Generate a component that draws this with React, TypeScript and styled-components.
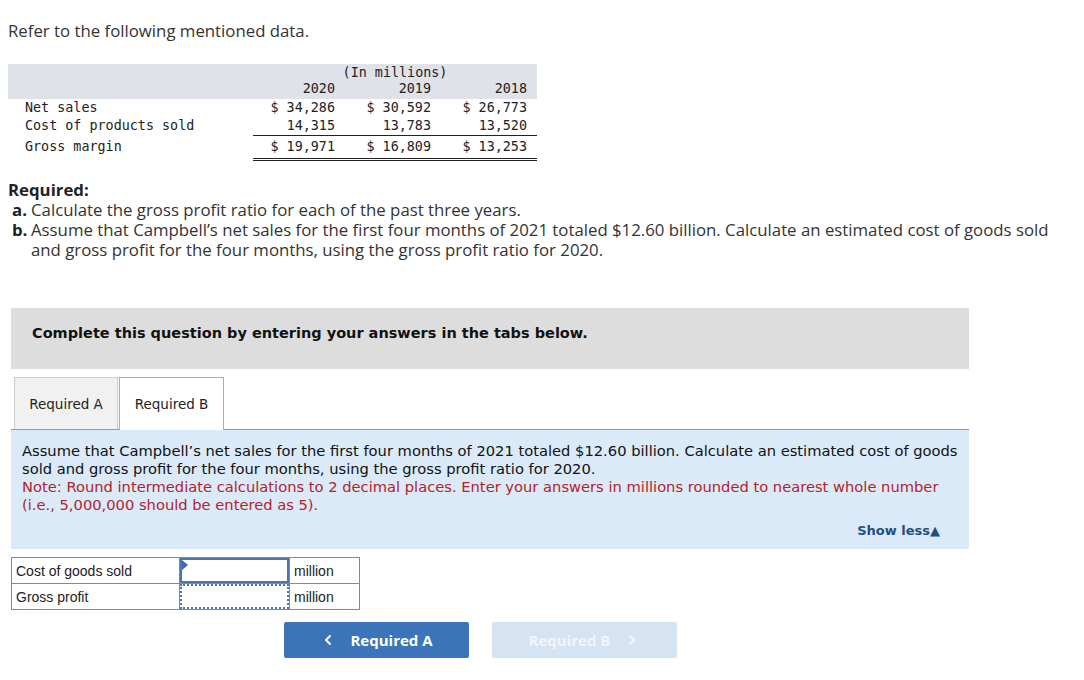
import React from "react";
import styled, { createGlobalStyle } from "styled-components";
import { ChevronLeft, ChevronRight } from "lucide-react";

const Global = createGlobalStyle`
  html, body { margin: 0; padding: 0; background: #fff; }
  body { font-family: "Open Sans", "Lato", sans-serif; color: #222; }
`;

const Page = styled.div`
  width: 1084px;
  padding: 21px 0 0 8px;
  box-sizing: border-box;
`;

const Intro = styled.p`
  margin: 0;
  font-family: "Open Sans", sans-serif;
  font-size: 16.8px;
  line-height: 20px;
  color: #333;
`;

const DataGrid = styled.div`
  margin-top: 23px;
  width: 529px;
  display: grid;
  grid-template-columns: 245px 84px 96px 104px;
  font-family: "DejaVu Sans Mono", "Liberation Mono", monospace;
  font-size: 13.4px;
  color: #222;
`;

const HeadBand = styled.div`
  grid-column: 1 / -1;
  display: grid;
  grid-template-columns: 245px 84px 96px 104px;
  background: #dfe2e9;
  padding: 1px 0 2px;
  line-height: 16px;
`;

const Caption = styled.div`
  grid-column: 2 / -1;
  text-align: center;
`;

const Cell = styled.div<{ $pr?: number; $under?: "single" | "double"; $h?: number }>`
  text-align: right;
  padding-right: ${(p) => p.$pr ?? 2}px;
  line-height: ${(p) => p.$h ?? 18}px;
  white-space: pre;
  border-bottom: ${(p) =>
    p.$under === "single" ? "1.5px solid #222" : p.$under === "double" ? "3px double #222" : "none"};
`;

const Label = styled.div<{ $h?: number }>`
  padding-left: 17px;
  line-height: ${(p) => p.$h ?? 18}px;
`;

const Required = styled.div`
  margin-top: 19px;
  width: 1060px;
  font-family: "Open Sans", sans-serif;
  font-size: 16.8px;
  line-height: 20px;
  color: #333;
`;

const ReqTitle = styled.div`
  font-weight: 700;
  color: #222;
`;

const ReqItem = styled.div`
  display: flex;
  padding-left: 4px;
`;

const ReqLetter = styled.span`
  font-weight: 700;
  width: 19px;
  flex: none;
  color: #222;
`;

const Banner = styled.div`
  margin: 48px 0 0 3px;
  width: 958px;
  height: 61px;
  background: #dddddd;
  padding: 16px 0 0 21px;
  box-sizing: border-box;
  font-family: "DejaVu Sans", Verdana, sans-serif;
  font-weight: 700;
  font-size: 14.5px;
  line-height: 18px;
  color: #111;
`;

const Tabs = styled.div`
  margin: 8px 0 0 3px;
  width: 958px;
  display: flex;
  padding-left: 3px;
  box-sizing: border-box;
  border-bottom: 1px solid #999;
`;

const Tab = styled.div<{ $active?: boolean }>`
  width: ${(p) => (p.$active ? 105 : 104)}px;
  box-sizing: border-box;
  display: flex;
  align-items: center;
  justify-content: center;
  border: 1px solid ${(p) => (p.$active ? "#aaa" : "#ccc")};
  border-bottom: none;
  background: ${(p) => (p.$active ? "#fff" : "#f1f1f1")};
  margin-right: 1px;
  margin-bottom: ${(p) => (p.$active ? "-1px" : "0")};
  height: ${(p) => (p.$active ? 53 : 52)}px;
  font-family: "DejaVu Sans", Tahoma, sans-serif;
  font-size: 13.5px;
  color: #222;
`;

const Panel = styled.div`
  margin-left: 3px;
  width: 958px;
  height: 119px;
  box-sizing: border-box;
  background: #dbeaf8;
  padding: 12px 11px 0 11px;
  font-family: "DejaVu Sans", Verdana, sans-serif;
  font-size: 14.7px;
  line-height: 18px;
  color: #111;
  display: flex;
  flex-direction: column;
`;

const Note = styled.div`
  color: #b3232a;
`;

const ShowLess = styled.div`
  margin-top: auto;
  margin-bottom: 9px;
  align-self: flex-end;
  margin-right: 18px;
  font-weight: 700;
  color: #1f4f80;
  font-size: 13px;
`;

const AnswerTable = styled.table`
  margin: 8px 0 0 3px;
  border-collapse: collapse;
  font-family: "Liberation Sans", Arial, sans-serif;
  font-size: 14px;
  color: #222;
`;

const Td = styled.td<{ $w: number }>`
  width: ${(p) => p.$w}px;
  height: 25px;
  border: 1px solid #888;
  padding: 0 4px;
  box-sizing: border-box;
`;

const InputTd = styled.td`
  width: 109px;
  height: 25px;
  padding: 0;
  border: 1px solid #888;
  position: relative;
`;

const AnswerInput = styled.input<{ $focused?: boolean }>`
  display: block;
  width: 109px;
  height: 25px;
  box-sizing: border-box;
  margin: 0;
  border: ${(p) => (p.$focused ? "2px solid #4d74ad" : "2px dotted #4d74ad")};
  background: #fff;
  outline: none;
`;

const Flag = styled.span`
  position: absolute;
  left: 2px;
  top: 2px;
  width: 0;
  height: 0;
  border-top: 5px solid transparent;
  border-bottom: 5px solid transparent;
  border-left: 6px solid #3d6bb3;
`;

const NavRow = styled.div`
  margin: 12px 0 0 276px;
  display: flex;
  gap: 23px;
`;

const NavButton = styled.button<{ $disabled?: boolean }>`
  width: 185px;
  height: 36px;
  border: none;
  border-radius: 2px;
  background: ${(p) => (p.$disabled ? "#d6e3f2" : "#3b74b9")};
  color: ${(p) => (p.$disabled ? "#f2f6fb" : "#fff")};
  font-family: "Open Sans", sans-serif;
  font-weight: 700;
  font-size: 15px;
  display: flex;
  align-items: center;
  justify-content: center;
  gap: 14px;
  padding: 0;
`;

export default function App() {
  return (
    <Page>
      <Global />
      <Intro>Refer to the following mentioned data.</Intro>

      <DataGrid>
        <HeadBand>
          <div />
          <Caption>(In millions)</Caption>
          <div />
          <Cell $h={16}>2020</Cell>
          <Cell $h={16}>2019</Cell>
          <Cell $h={16} $pr={10}>2018</Cell>
        </HeadBand>
        <Label>Net sales</Label>
        <Cell>$ 34,286</Cell>
        <Cell>$ 30,592</Cell>
        <Cell $pr={10}>$ 26,773</Cell>
        <Label>Cost of products sold</Label>
        <Cell $under="single">14,315</Cell>
        <Cell $under="single">13,783</Cell>
        <Cell $under="single" $pr={10}>13,520</Cell>
        <Label $h={22}>Gross margin</Label>
        <Cell $h={22} $under="double">$ 19,971</Cell>
        <Cell $h={22} $under="double">$ 16,809</Cell>
        <Cell $h={22} $under="double" $pr={10}>$ 13,253</Cell>
      </DataGrid>

      <Required>
        <ReqTitle>Required:</ReqTitle>
        <ReqItem>
          <ReqLetter>a.</ReqLetter>
          <span>Calculate the gross profit ratio for each of the past three years.</span>
        </ReqItem>
        <ReqItem>
          <ReqLetter>b.</ReqLetter>
          <span>
            Assume that Campbell’s net sales for the first four months of 2021 totaled $12.60 billion. Calculate an
            estimated cost of goods sold and gross profit for the four months, using the gross profit ratio for 2020.
          </span>
        </ReqItem>
      </Required>

      <Banner>Complete this question by entering your answers in the tabs below.</Banner>

      <Tabs>
        <Tab>Required A</Tab>
        <Tab $active>Required B</Tab>
      </Tabs>

      <Panel>
        <div>
          Assume that Campbell’s net sales for the first four months of 2021 totaled $12.60 billion. Calculate an
          estimated cost of goods sold and gross profit for the four months, using the gross profit ratio for 2020.
        </div>
        <Note>
          Note: Round intermediate calculations to 2 decimal places. Enter your answers in millions rounded to nearest
          whole number (i.e., 5,000,000 should be entered as 5).
        </Note>
        <ShowLess>Show less▲</ShowLess>
      </Panel>

      <AnswerTable>
        <tbody>
          <tr>
            <Td $w={168}>Cost of goods sold</Td>
            <InputTd>
              <AnswerInput $focused aria-label="Cost of goods sold" />
              <Flag />
            </InputTd>
            <Td $w={70}>million</Td>
          </tr>
          <tr>
            <Td $w={168}>Gross profit</Td>
            <InputTd>
              <AnswerInput aria-label="Gross profit" />
            </InputTd>
            <Td $w={70}>million</Td>
          </tr>
        </tbody>
      </AnswerTable>

      <NavRow>
        <NavButton>
          <ChevronLeft size={16} strokeWidth={3} />
          <span>Required A</span>
        </NavButton>
        <NavButton $disabled>
          <span>Required B</span>
          <ChevronRight size={16} strokeWidth={3} />
        </NavButton>
      </NavRow>
    </Page>
  );
}
